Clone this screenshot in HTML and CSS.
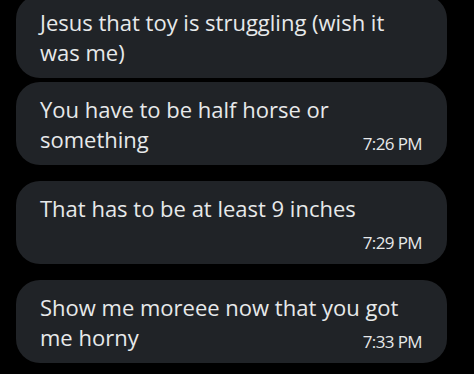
FILE: index.html
```html
<!DOCTYPE html>
<html lang="en">
<head>
    <meta charset="UTF-8">
    <meta name="viewport" content="width=device-width, initial-scale=1.0">
    <title>messages</title>
    <link rel="stylesheet" href="styles.css">
</head>
<body>
    <div class="conversation">
        <div class="msg-group">
            <div class="bubble">
                <p class="msg-text">Jesus that toy is struggling (wish it was me)</p>
            </div>
            <div class="bubble">
                <p class="msg-text">You have to be half horse or something<span class="msg-time">7:26 PM</span></p>
            </div>
        </div>
        <div class="msg-group">
            <div class="bubble">
                <p class="msg-text">That has to be at least 9 inches<span class="msg-time">7:29 PM</span></p>
            </div>
        </div>
        <div class="msg-group">
            <div class="bubble">
                <p class="msg-text">Show me moreee now that you got me horny<span class="msg-time">7:33 PM</span></p>
            </div>
        </div>
    </div>
</body>
</html>
```

FILE: styles.css
```css
body {
    margin: 0;
    background-color: #000;
    font-family: "Open Sans", "Noto Sans", sans-serif;
    color: #e7e9ea;
}

.conversation {
    display: flex;
    flex-direction: column;
    gap: 16px;
    margin: -5px 27px 0 16px;
}

.msg-group {
    display: flex;
    flex-direction: column;
    gap: 4px;
}

.bubble {
    background-color: #202327;
    border-radius: 24px;
    padding: 12px 24px 11px;
}

.msg-text {
    margin: 0;
    font-size: 22px;
    line-height: 30px;
}

.msg-text::after {
    content: "";
    display: block;
    clear: both;
}

.msg-time {
    float: right;
    margin: 10px 1px 0 12px;
    font-size: 17px;
    line-height: 20px;
    letter-spacing: -0.6px;
}
```
